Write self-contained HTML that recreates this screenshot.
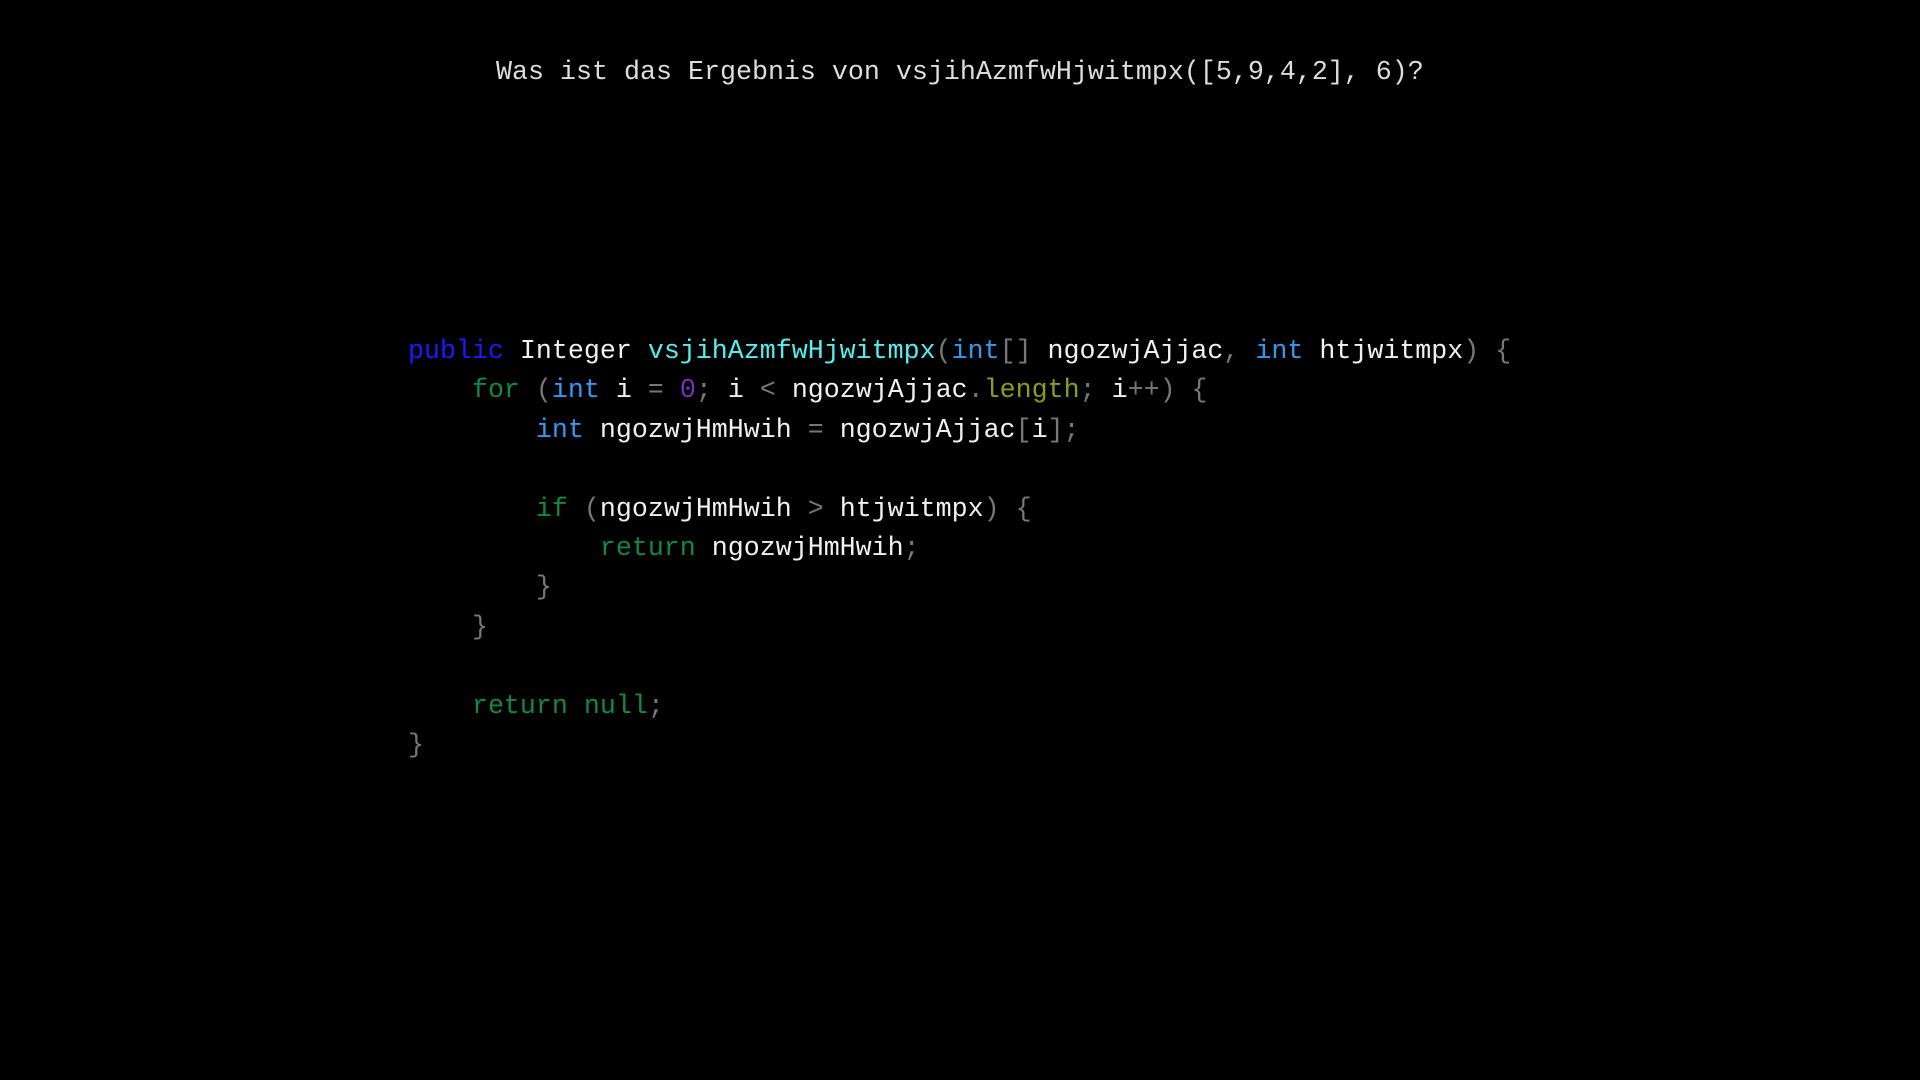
<!DOCTYPE html>
<html><head><meta charset="utf-8"><style>
html,body{margin:0;background:#000;width:1920px;height:1080px;overflow:hidden}
.t{position:absolute;left:496px;top:54px;font:26.67px/38px "Liberation Mono",monospace;color:#ddd;white-space:pre}
pre{position:absolute;left:408px;top:333px;margin:0;font:26.65px/39.4px "Liberation Mono",monospace;color:#f0f0f0}
.k{color:#1a1aff}.f{color:#55eeee}.i{color:#3399ee}.g{color:#118844}.p{color:#777}.n{color:#7733bb}.l{color:#8a9a22}
</style></head><body>
<div class="t">Was ist das Ergebnis von vsjihAzmfwHjwitmpx([5,9,4,2], 6)?</div>
<pre><span class="k">public</span> Integer <span class="f">vsjihAzmfwHjwitmpx</span><span class="p">(</span><span class="i">int</span><span class="p">[]</span> ngozwjAjjac<span class="p">,</span> <span class="i">int</span> htjwitmpx<span class="p">) {</span>
    <span class="g">for</span> <span class="p">(</span><span class="i">int</span> i <span class="p">=</span> <span class="n">0</span><span class="p">;</span> i <span class="p">&lt;</span> ngozwjAjjac<span class="p">.</span><span class="l">length</span><span class="p">;</span> i<span class="p">++) {</span>
        <span class="i">int</span> ngozwjHmHwih <span class="p">=</span> ngozwjAjjac<span class="p">[</span>i<span class="p">];</span>

        <span class="g">if</span> <span class="p">(</span>ngozwjHmHwih <span class="p">&gt;</span> htjwitmpx<span class="p">) {</span>
            <span class="g">return</span> ngozwjHmHwih<span class="p">;</span>
        <span class="p">}</span>
    <span class="p">}</span>

    <span class="g">return null</span><span class="p">;</span>
<span class="p">}</span></pre>
</body></html>
